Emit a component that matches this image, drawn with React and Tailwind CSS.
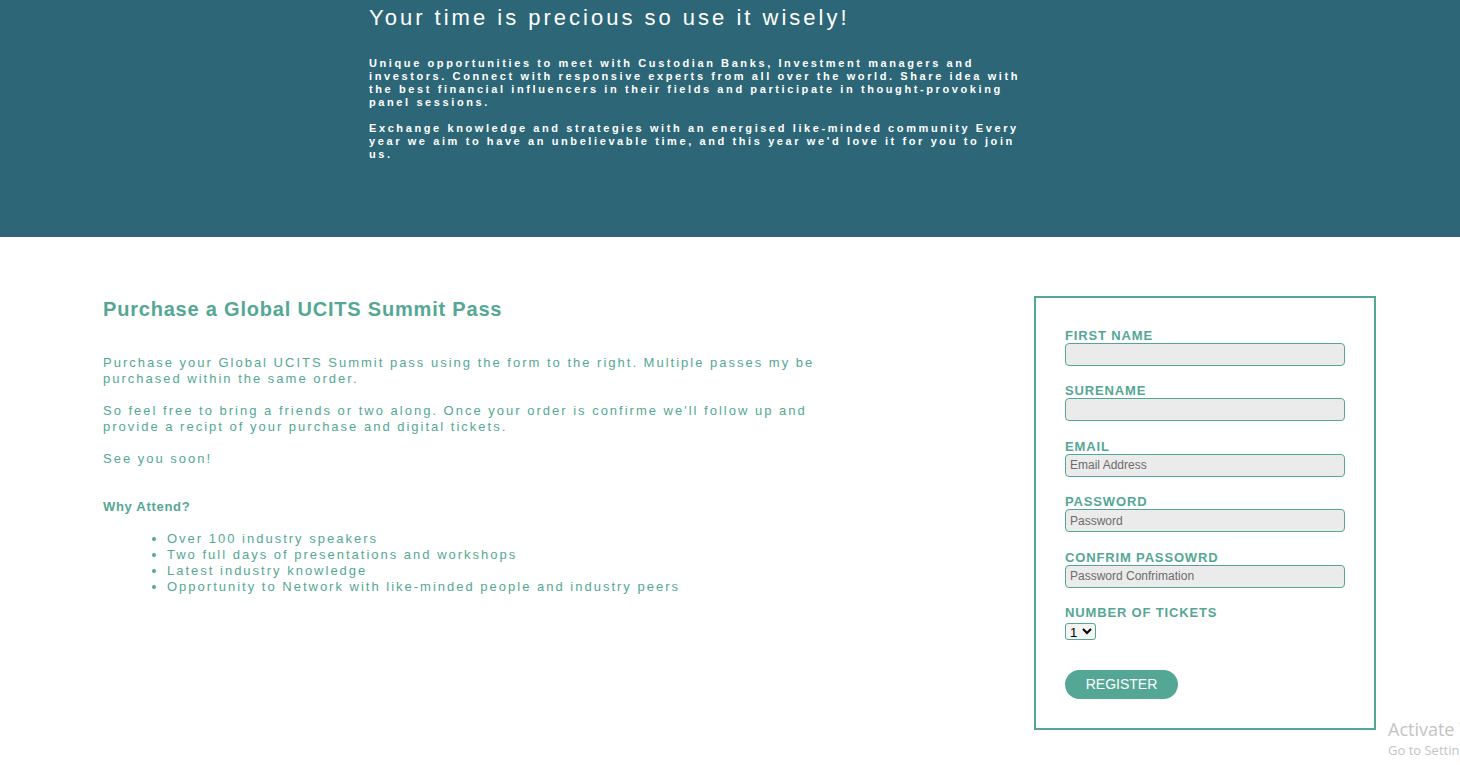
import React from 'react';

const fields = [
  { label: 'FIRST NAME', placeholder: '' },
  { label: 'SURENAME', placeholder: '' },
  { label: 'EMAIL', placeholder: 'Email Address' },
  { label: 'PASSWORD', placeholder: 'Password' },
  { label: 'CONFRIM PASSOWRD', placeholder: 'Password Confrimation' },
];

const reasons = [
  'Over 100 industry speakers',
  'Two full days of presentations and workshops',
  'Latest industry knowledge',
  'Opportunity to Network with like-minded people and industry peers',
];

export default function App() {
  return (
    <div className="relative w-[1460px] h-[770px] overflow-hidden bg-white font-['Liberation_Sans',Arial,sans-serif]">
      {/* Hero banner */}
      <header className="h-[237px] bg-[#2d6777] pl-[369px] pt-[5px] text-white">
        <h1 className="text-[22px] leading-[26px] tracking-[3px]">Your time is precious so use it wisely!</h1>
        <div className="w-[660px] mt-[26px] text-[11px] leading-[13px] font-bold tracking-[2.6px]">
          <p className="mb-[13px]">
            Unique opportunities to meet with Custodian Banks, Investment managers and investors. Connect with responsive experts from all over the world. Share idea with the best financial influencers in their fields and participate in thought-provoking panel sessions.
          </p>
          <p>
            Exchange knowledge and strategies with an energised like-minded community Every year we aim to have an unbelievable time, and this year we'd love it for you to join us.
          </p>
        </div>
      </header>

      {/* Purchase section */}
      <main className="flex justify-between pl-[103px] pr-[84px] pt-[59px] text-[#55a795]">
        <div className="w-[740px] pt-[1px]">
          <h2 className="text-[20px] leading-[24px] font-bold tracking-[0.8px]">Purchase a Global UCITS Summit Pass</h2>
          <div className="mt-[34px] text-[13px] leading-[16px] tracking-[2px]">
            <p>Purchase your Global UCITS Summit pass using the form to the right. Multiple passes my be purchased within the same order.</p>
            <p className="mt-[16px]">So feel free to bring a friends or two along. Once your order is confirme we'll follow up and provide a recipt of your purchase and digital tickets.</p>
            <p className="mt-[16px]">See you soon!</p>
          </div>
          <h3 className="mt-[32px] text-[13px] leading-[16px] font-bold tracking-[0.7px]">Why Attend?</h3>
          <ul className="mt-[16px] pl-[64px] list-disc text-[13px] leading-[16px] tracking-[2px]">
            {reasons.map((r) => (
              <li key={r}>{r}</li>
            ))}
          </ul>
        </div>

        <form className="w-[342px] h-[434px] border-2 border-[#55a795] pl-[29px] pt-[30px]">
          {fields.map((f, i) => (
            <div key={f.label} className={i > 0 ? 'mt-[17.4px]' : ''}>
              <label className="block text-[13px] leading-[15px] font-bold tracking-[0.85px]">{f.label}</label>
              <input
                type="text"
                placeholder={f.placeholder}
                className="block w-[280px] h-[23px] rounded-[4px] border border-[#55a795] bg-[#ebebeb] px-[4px] text-[12px] text-[#333] placeholder:text-[#6b6b6b] outline-none"
              />
            </div>
          ))}
          <div className="mt-[17.4px]">
            <label className="block text-[13px] leading-[15px] font-bold tracking-[0.85px]">NUMBER OF TICKETS</label>
            <select className="mt-[1px] h-[17px] w-[31px] rounded-[3px] border border-[#55a795] bg-[#f4f4f4] text-[13px] leading-[15px] text-black">
              <option>1</option>
              <option>2</option>
              <option>3</option>
              <option>4</option>
            </select>
          </div>
          <button
            type="button"
            className="mt-[26px] block w-[113px] h-[29px] rounded-full bg-[#55a795] text-white text-[14px]"
          >
            REGISTER
          </button>
        </form>
      </main>

      {/* OS watermark */}
      <div className="absolute left-[1388px] top-[717px] whitespace-nowrap text-[#c4c4c4] font-['Open_Sans',sans-serif] pointer-events-none">
        <div className="text-[18px] leading-[24px]">Activate Windows</div>
        <div className="text-[13px] leading-[18px]">Go to Settings to activate Windows.</div>
      </div>
    </div>
  );
}
